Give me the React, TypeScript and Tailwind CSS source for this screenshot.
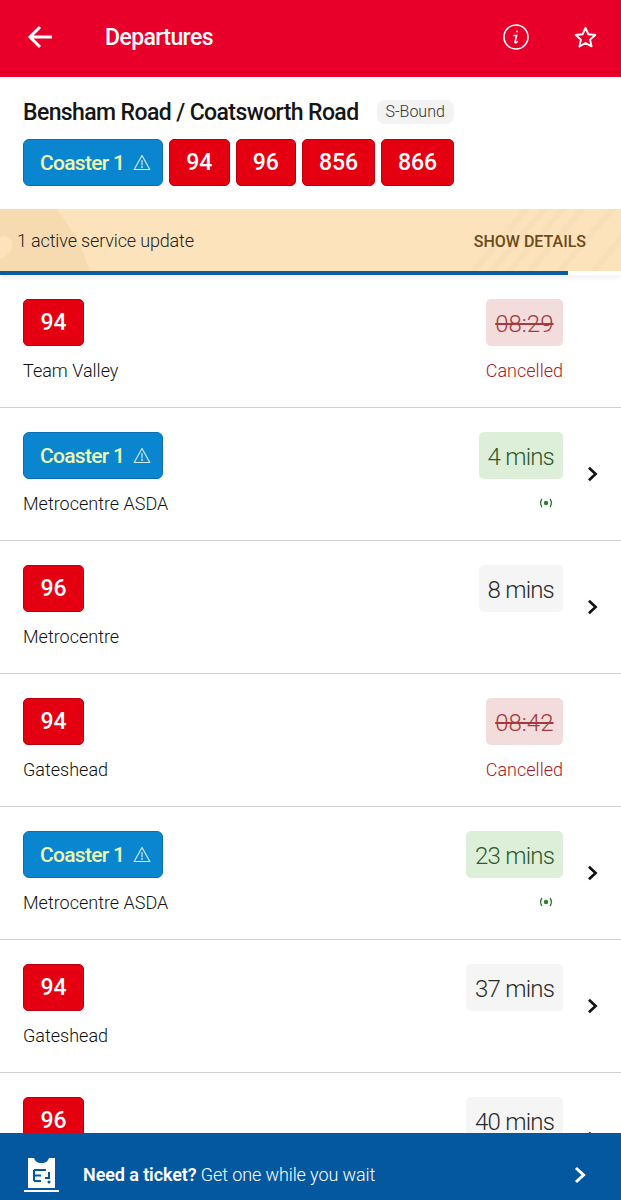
import React from "react";

function Warn({ className = "" }: { className?: string }) {
  return (
    <svg viewBox="0 0 18 17" className={className} fill="none" stroke="#cfe9f5" strokeWidth="1.2" strokeLinejoin="round">
      <path d="M9 1.5 16.8 15.5H1.2Z" />
      <path d="M9 6.5V11" strokeLinecap="round" />
      <circle cx="9" cy="13" r="0.4" />
    </svg>
  );
}

function Chip({ label, top = false }: { label: string; top?: boolean }) {
  if (label === "Coaster 1") {
    return (
      <div className="flex h-[47px] w-[140px] items-center gap-[9px] rounded-[6px] border border-[#0a6fb0] bg-[#0a85cf] pl-[16px]">
        <span className="pt-[2px] text-[21px] font-medium tracking-[-0.7px] text-[#eef7ae]">{label}</span>
        <Warn className="h-[17px] w-[18px]" />
      </div>
    );
  }
  const w = label.length === 3 ? "w-[73px]" : top ? "w-[60.5px]" : "w-[61px]";
  return (
    <div className={`flex h-[47px] ${w} items-center justify-center rounded-[5px] border border-[#b90012] bg-[#e50011] pt-[2px] text-[23px] font-medium text-white`}>
      {label}
    </div>
  );
}

function Chevron({ className = "", color = "#111111" }: { className?: string; color?: string }) {
  return (
    <svg viewBox="0 0 12 18" className={className} fill="none" stroke={color} strokeWidth="3">
      <path d="M2 2 9.500 9 2 16" />
    </svg>
  );
}

type Row = { chip: string; dest: string; time: string; kind: "cancel" | "live" | "plan" };
const rows: Row[] = [
  { chip: "94", dest: "Team Valley", time: "08:29", kind: "cancel" },
  { chip: "Coaster 1", dest: "Metrocentre ASDA", time: "4 mins", kind: "live" },
  { chip: "96", dest: "Metrocentre", time: "8 mins", kind: "plan" },
  { chip: "94", dest: "Gateshead", time: "08:42", kind: "cancel" },
  { chip: "Coaster 1", dest: "Metrocentre ASDA", time: "23 mins", kind: "live" },
  { chip: "94", dest: "Gateshead", time: "37 mins", kind: "plan" },
  { chip: "96", dest: "", time: "40 mins", kind: "plan" },
];

function Departure({ row }: { row: Row }) {
  const box =
    row.kind === "cancel"
      ? "bg-[#f3dcdc] text-[#a8383c] line-through px-[9.5px]"
      : row.kind === "live"
        ? "bg-[#deefd9] text-[#2c5a2c] tracking-[-0.8px] px-[9px]"
        : "bg-[#f5f5f5] text-[#2a2a2a] tracking-[-0.8px] px-[9px]";
  return (
    <div className="flex h-[133px] shrink-0 items-center border-b border-[#cfcfcf] bg-white pl-[23px]">
      <div className="flex h-full flex-1 items-start justify-between pt-[24px]">
        <div className="flex flex-col items-start">
          <Chip label={row.chip} />
          <div className="mt-[14px] text-[18px] font-light leading-[22px] text-[#111111]">{row.dest}</div>
        </div>
        <div className="flex flex-col items-end">
          <div className={`flex h-[47px] items-center rounded-[5px] pt-[2px] text-[24px] font-light ${box}`}>{row.time}</div>
          {row.kind === "cancel" && (
            <div className="mt-[14px] text-[18px] font-light leading-[22px] text-[#a82025]">Cancelled</div>
          )}
          {row.kind === "live" && (
            <svg viewBox="0 0 14 10" className="mr-[10px] mt-[19px] h-[10px] w-[14px]" fill="none" stroke="#2e7d32" strokeWidth="1.3">
              <path d="M3 1C1.200 3.500 1.200 6.500 3 9M11 1C12.800 3.500 12.800 6.500 11 9" />
              <circle cx="7" cy="5" r="2.2" fill="#2e7d32" stroke="none" />
            </svg>
          )}
        </div>
      </div>
      <div className="flex w-[58px] shrink-0 justify-center">
        {row.kind !== "cancel" && <Chevron className="h-[16px] w-[11px]" />}
      </div>
    </div>
  );
}

export default function App() {
  return (
    <div className="relative flex h-[1200px] w-[621px] flex-col overflow-hidden bg-white font-['Roboto','Noto_Sans',sans-serif]">
      <header className="flex h-[77px] shrink-0 items-center bg-[#e8002b] pb-[3px] text-white">
        <svg viewBox="0 0 26 24" className="ml-[27px] h-[24px] w-[26px]" fill="none" stroke="white" strokeWidth="3">
          <path d="M25 12H3M13 2 3 12l10 10" />
        </svg>
        <h1 className="ml-[52px] mt-[3px] flex-1 text-[23px] font-medium tracking-[-0.6px]">Departures</h1>
        <svg viewBox="0 0 26 26" className="mr-[-1px] h-[26px] w-[26px]" fill="none" stroke="white" strokeWidth="1.6">
          <circle cx="13" cy="13" r="12" />
          <path d="M11 11.500h2.600l-1.600 6.500c-.2 1 .8 1.200 2.200-.3" strokeLinecap="round" />
          <circle cx="14" cy="7.500" r="0.9" fill="white" stroke="none" />
        </svg>
        <svg viewBox="0 0 24 24" className="ml-[46px] mr-[24px] h-[23px] w-[23px]" fill="none" stroke="white" strokeWidth="2" strokeLinejoin="round">
          <path d="M12 2l3 6.600 7.200.8-5.400 4.800 1.500 7.100L12 17.700l-6.300 3.600 1.500-7.100L1.800 9.400 9 8.600z" />
        </svg>
      </header>

      <section className="h-[132px] shrink-0 bg-white px-[23px]">
        <div className="flex h-[62px] items-start pt-[21px]">
          <h2 className="text-[23px] font-medium leading-[30px] tracking-[-0.6px] text-[#151515]">Bensham Road / Coatsworth Road</h2>
          <span className="ml-[18px] mt-[2px] flex h-[24px] items-center rounded-[8px] bg-[#f3f3f3] px-[9px] text-[16px] font-light text-[#333333]">S-Bound</span>
        </div>
        <div className="flex gap-[6px]">
          {["Coaster 1", "94", "96", "856", "866"].map((c) => (
            <Chip key={c} label={c} top />
          ))}
        </div>
      </section>

      <div className="relative flex h-[62px] shrink-0 items-center justify-between overflow-hidden bg-[#fde3bb] pl-[17px] pr-[35px]">
        <svg viewBox="0 0 621 62" className="absolute inset-0 h-[62px] w-[621px]" fill="none">
          <path d="M10 0h46c12 14 26 36 34 62H0V50c10 -4 16 -14 10 -20C4 24 0 28 0 30V0z" fill="#f7dbb0" />
          <g stroke="#f9dfb7" strokeWidth="6">
            <path d="M470 66 530 -4M488 66 548 -4M506 66 566 -4M526 66 586 -4M556 66 616 -4M590 66 650 -4" />
          </g>
        </svg>
        <span className="relative pt-[1px] text-[18px] font-light tracking-[-0.15px] text-[#222222]">1 active service update</span>
        <span className="relative pt-[3px] text-[16px] font-medium text-[#6b4a1c]">SHOW DETAILS</span>
      </div>

      <div className="relative z-10 h-[4px] shrink-0 bg-white shadow-[0_3px_4px_rgba(0,0,0,0.07)]">
        <div className="h-[4px] w-[568px] bg-[#0b5aa2]" />
      </div>

      <main className="flex flex-col">
        {rows.map((r, i) => (
          <Departure key={i} row={r} />
        ))}
      </main>

      <div className="absolute bottom-0 left-0 z-20 flex h-[67px] w-[621px] items-center bg-[#04589f] pt-[16px] text-white">
        <svg viewBox="0 0 35 34" className="ml-[24px] h-[34px] w-[35px]" fill="none">
          <path d="M4 0h6c1 3 3 5 7.500 5S24 3 25 0h6v30H4z" fill="white" />
          <path d="M10 12h12M10 12v11M10 17.500h7M10 23h7M25 14v6h-4" stroke="#04589f" strokeWidth="2" />
          <circle cx="25" cy="24" r="1.500" fill="#04589f" />
          <rect y="32" width="35" height="2" fill="white" />
        </svg>
        <div className="ml-[24px] flex-1 text-[18px] font-light tracking-[-0.1px]">
          <span className="font-semibold">Need a ticket?</span> Get one while you wait
        </div>
        <Chevron className="mr-[35px] h-[18px] w-[12px]" color="white" />
      </div>
    </div>
  );
}
